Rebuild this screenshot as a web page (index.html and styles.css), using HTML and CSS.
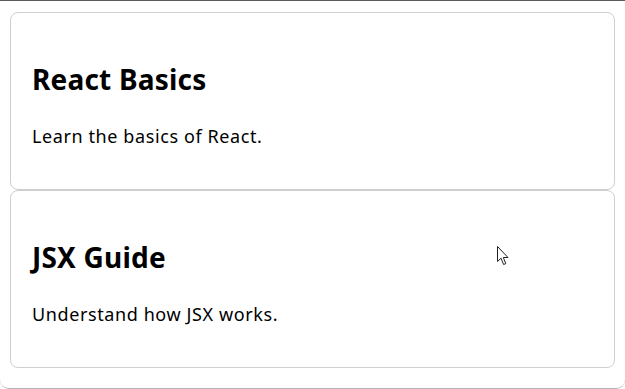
FILE: index.html
```html
<!DOCTYPE html>
<html lang="en">
  <head>
    <meta charset="UTF-8" />
    <meta name="viewport" content="width=device-width, initial-scale=1.0" />
    <title>Guides</title>
    <link rel="stylesheet" href="styles.css">
  </head>
  <body>
    <div class="window">
      <div class="card">
        <h2 class="card-title">React Basics</h2>
        <p class="card-text">Learn the basics of React.</p>
      </div>

      <div class="card">
        <h2 class="card-title">JSX Guide</h2>
        <p class="card-text">Understand how JSX works.</p>
      </div>

      <!-- mouse pointer captured in the shot -->
      <svg class="pointer" width="13" height="20" viewBox="0 0 13 20">
        <path d="M0.5 0.5 L0.5 15.5 L4 12.2 L6.6 18.5 L8.8 17.6 L6.3 11.5 L11 11.5 Z"
              fill="#fff" stroke="#222" stroke-width="1" stroke-linejoin="round" />
      </svg>
    </div>
  </body>
</html>
```

FILE: styles.css
```css
* {
  margin: 0;
  padding: 0;
  box-sizing: border-box;
}

body {
  font-family: "Noto Sans", "Noto Sans CJK KR", sans-serif;
  background-color: #fff;
  color: #000;
}

.window {
  position: relative;
  height: 389px;
  padding: 11px 10px 0 10px;
  border-top: 1px solid #5c5c5c;
  border-bottom: 1px solid #b4b4b4;
  border-radius: 0 0 9px 9px;
  display: flex;
  flex-direction: column;
}

.card {
  height: 178px;
  padding: 0 21px;
  border: 1px solid #cfcfcf;
  border-radius: 8px;
  background-color: #fff;
}

.card-title {
  margin-top: 48px;
  font-size: 28px;
  line-height: 36px;
  font-weight: 700;
  letter-spacing: 0.2px;
}

.card-text {
  margin-top: 26px;
  font-size: 18px;
  line-height: 26px;
  letter-spacing: 0.6px;
}

.pointer {
  position: absolute;
  left: 497px;
  top: 245px;
}
```
